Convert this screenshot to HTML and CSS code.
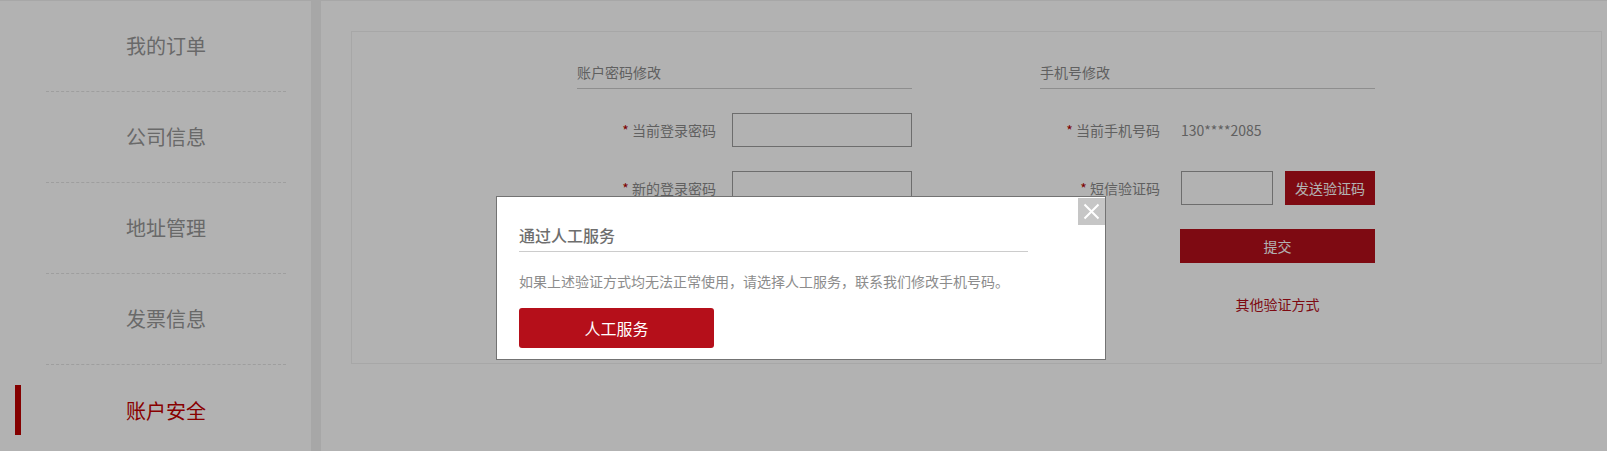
FILE: index.html
```html
<!DOCTYPE html>
<html lang="zh-CN">
<head>
<meta charset="utf-8">
<title>账户安全</title>
<link rel="stylesheet" href="styles.css">
</head>
<body>
<div class="page">
  <aside class="sidebar">
    <ul class="menu">
      <li class="menu-item">我的订单</li>
      <li class="menu-item">公司信息</li>
      <li class="menu-item">地址管理</li>
      <li class="menu-item">发票信息</li>
      <li class="menu-item active">账户安全</li>
    </ul>
  </aside>
  <main class="main">
    <div class="box">
      <section class="form form-pwd">
        <h3 class="form-title">账户密码修改</h3>
        <div class="row">
          <label class="label"><span class="req">*</span> 当前登录密码</label>
          <input class="input" type="password">
        </div>
        <div class="row">
          <label class="label"><span class="req">*</span> 新的登录密码</label>
          <input class="input" type="password">
        </div>
        <div class="row">
          <label class="label"><span class="req">*</span> 确认登录密码</label>
          <input class="input" type="password">
        </div>
        <div class="row row-submit">
          <button class="btn-submit">提交</button>
        </div>
      </section>
      <section class="form form-phone">
        <h3 class="form-title">手机号修改</h3>
        <div class="row">
          <label class="label"><span class="req">*</span> 当前手机号码</label>
          <span class="value">130****2085</span>
        </div>
        <div class="row">
          <label class="label"><span class="req">*</span> 短信验证码</label>
          <input class="input input-sms" type="text">
          <button class="btn-send">发送验证码</button>
        </div>
        <div class="row row-submit">
          <button class="btn-submit">提交</button>
        </div>
        <div class="other">
          <a class="other-link">其他验证方式</a>
        </div>
      </section>
    </div>
  </main>
</div>

<div class="mask"></div>
<div class="dialog">
  <button class="dialog-close" aria-label="关闭">
    <svg width="17" height="17" viewBox="0 0 17 17"><path d="M1.5 1.5 L15.5 15.5 M15.5 1.5 L1.5 15.5" stroke="#ffffff" stroke-width="2" fill="none"/></svg>
  </button>
  <h3 class="dialog-title">通过人工服务</h3>
  <p class="dialog-text">如果上述验证方式均无法正常使用，请选择人工服务，联系我们修改手机号码。</p>
  <button class="dialog-btn">人工服务</button>
</div>
</body>
</html>
```

FILE: styles.css
```css
* {
  box-sizing: border-box;
}

html, body {
  margin: 0;
  padding: 0;
}

body {
  width: 1607px;
  height: 451px;
  overflow: hidden;
  font-family: "Noto Sans CJK SC", "Noto Sans", sans-serif;
  background: #f0f0f0;
  color: #888;
}

.page {
  display: flex;
  gap: 10px;
  height: 451px;
  border-top: 1px solid #f0f0f0;
}

/* sidebar */
.sidebar {
  width: 311px;
  background: #ffffff;
}

.menu {
  list-style: none;
  margin: 0 0 0 46px;
  padding: 0;
  width: 240px;
}

.menu-item {
  position: relative;
  height: 91px;
  line-height: 90px;
  text-align: center;
  font-size: 20px;
  color: #979797;
  border-bottom: 1px dashed #e2e2e2;
}

.menu-item.active {
  color: #c40000;
  border-bottom: none;
  line-height: 92px;
}

.menu-item.active::before {
  content: "";
  position: absolute;
  left: -31px;
  top: 20px;
  width: 6px;
  height: 50px;
  background: #bd0000;
}

/* main */
.main {
  flex: 1;
  background: #ffffff;
  padding: 30px 5px 0 30px;
}

.box {
  height: 333px;
  border: 1px solid #f0f0f0;
  display: flex;
  gap: 128px;
  padding: 30px 0 0 225px;
}

.form {
  width: 335px;
  display: flex;
  flex-direction: column;
  gap: 24px;
}

.form-title {
  margin: 0;
  font-size: 14px;
  font-weight: normal;
  line-height: 20px;
  padding-bottom: 6px;
  border-bottom: 1px solid #cccccc;
  color: #8a8a8a;
}

.row {
  display: flex;
  align-items: center;
  height: 34px;
  font-size: 14px;
  color: #8a8a8a;
}

.form-pwd .label {
  width: 139px;
  margin-right: 16px;
  text-align: right;
}

.form-phone .label {
  width: 120px;
  margin-right: 21px;
  text-align: right;
}

.req {
  color: #b30000;
}

.input {
  width: 180px;
  height: 34px;
  border: 1px solid #9c9c9c;
  background: #ffffff;
  margin: 0;
  padding: 0 6px;
  font: inherit;
}

.input-sms {
  width: 92px;
}

.value {
  color: #8a8a8a;
  font-size: 14px;
}

.btn-send {
  width: 90px;
  height: 34px;
  margin-left: 12px;
  border: none;
  background: #b50f1a;
  color: #ffffff;
  font-family: inherit;
  font-size: 14px;
  padding: 0;
}

.form-pwd .row-submit {
  padding-left: 155px;
}

.form-phone .row-submit {
  padding-left: 140px;
}

.btn-submit {
  width: 195px;
  height: 34px;
  border: none;
  background: #b50f1a;
  color: #ffffff;
  font-family: inherit;
  font-size: 14px;
  padding: 0;
}

.form-pwd .btn-submit {
  width: 180px;
}

.other {
  margin-top: 7px;
  padding-left: 140px;
}

.other-link {
  display: block;
  width: 195px;
  text-align: center;
  font-size: 14px;
  line-height: 20px;
  color: #b50f1a;
  cursor: pointer;
}

/* overlay + dialog */
.mask {
  position: fixed;
  inset: 0;
  background: rgba(0, 0, 0, 0.3);
}

.dialog {
  position: absolute;
  left: 496px;
  top: 196px;
  width: 610px;
  height: 164px;
  background: #ffffff;
  border: 1px solid #737373;
  padding: 27px 22px 11px 22px;
}

.dialog-close {
  position: absolute;
  top: 1px;
  right: 0;
  width: 27px;
  height: 27px;
  border: none;
  padding: 0;
  background: #c6c6c6;
  display: flex;
  align-items: center;
  justify-content: center;
}

.dialog-title {
  margin: 0;
  width: 509px;
  font-size: 16px;
  font-weight: 500;
  line-height: 22px;
  padding-bottom: 5px;
  border-bottom: 1px solid #cccccc;
  color: #6e6e6e;
}

.dialog-text {
  margin: 19px 0 0 0;
  font-size: 14px;
  line-height: 20px;
  color: #8c8c8c;
}

.dialog-btn {
  display: block;
  margin-top: 17px;
  width: 195px;
  height: 40px;
  border: none;
  border-radius: 3px;
  background: #b50f1a;
  color: #ffffff;
  font-family: inherit;
  font-size: 16px;
  padding: 0;
}
```
